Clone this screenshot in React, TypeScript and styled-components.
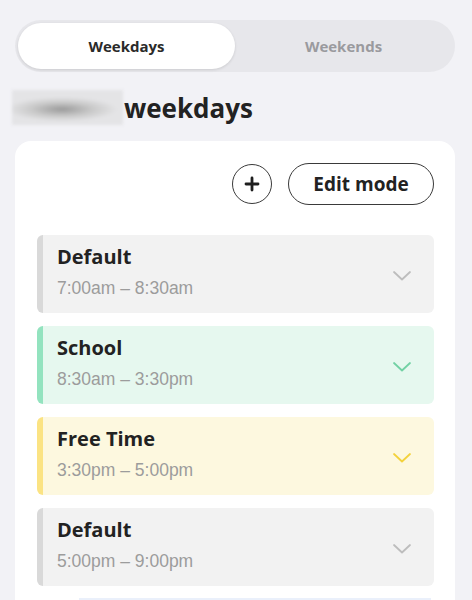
import * as React from 'react';
import styled, { createGlobalStyle } from 'styled-components';

const GlobalStyle = createGlobalStyle`
  html, body {
    margin: 0;
    padding: 0;
    background: #f2f2f6;
  }
  body {
    font-family: "Open Sans", "Noto Sans", sans-serif;
    color: #222;
  }
`;

const Page = styled.div`
  width: 472px;
  height: 600px;
  overflow: hidden;
  padding: 20px 17px 0 15px;
  box-sizing: border-box;
`;

const Segmented = styled.div`
  display: grid;
  grid-template-columns: 1fr 1fr;
  height: 52px;
  padding: 3px;
  box-sizing: border-box;
  border-radius: 26px;
  background: #e7e7eb;
`;

const Segment = styled.div<{ $active?: boolean }>`
  display: flex;
  align-items: center;
  justify-content: center;
  border-radius: 23px;
  font-size: 15px;
  font-weight: 700;
  color: ${(p) => (p.$active ? '#2a2a2a' : '#9a9a9e')};
  background: ${(p) => (p.$active ? '#fff' : 'transparent')};
  box-shadow: ${(p) => (p.$active ? '0 1px 3px rgba(0,0,0,0.12)' : 'none')};
`;

const Heading = styled.h1`
  display: flex;
  align-items: center;
  margin: 18px 0 16px -3px;
  height: 35px;
  font-size: 26px;
  font-weight: 700;
  color: #222;
`;

const Blurred = styled.span`
  display: inline-block;
  width: 111px;
  height: 35px;
  margin-right: 1px;
  background: radial-gradient(ellipse 50% 35% at 45% 55%, #9a9a9a 0%, #c9c9c9 55%, #e4e4e6 100%);
  filter: blur(1.5px);
`;

const Card = styled.div`
  background: #fff;
  border-radius: 16px;
  padding: 22px 21px 0 22px;
  height: 480px;
  box-sizing: border-box;
`;

const Toolbar = styled.div`
  display: flex;
  justify-content: flex-end;
  align-items: center;
  gap: 16px;
  margin-bottom: 30px;
`;

const RoundButton = styled.button`
  width: 40px;
  height: 40px;
  border-radius: 50%;
  border: 1.5px solid #3a3a3a;
  background: #fff;
  display: flex;
  align-items: center;
  justify-content: center;
  padding: 0;
`;

const PillButton = styled.button`
  height: 42px;
  width: 146px;
  padding: 0;
  border-radius: 21px;
  border: 1.5px solid #3a3a3a;
  background: #fff;
  font-family: "Open Sans", "Noto Sans", sans-serif;
  font-size: 19px;
  font-weight: 700;
  color: #222;
`;

const List = styled.div`
  display: flex;
  flex-direction: column;
  gap: 13px;
`;

const Item = styled.div<{ $bg: string; $bar: string }>`
  display: flex;
  align-items: center;
  height: 78px;
  border-radius: 6px;
  background: ${(p) => p.$bg};
  border-left: 6px solid ${(p) => p.$bar};
  padding: 0 22px 0 14px;
  box-sizing: border-box;
`;

const ItemText = styled.div`
  flex: 1;
  display: flex;
  flex-direction: column;
  align-self: flex-start;
  padding-top: 10px;
  gap: 9px;
`;

const ItemTitle = styled.div`
  font-size: 20px;
  font-weight: 700;
  color: #222;
  line-height: 24px;
`;

const ItemTime = styled.div`
  font-family: "Liberation Sans", Arial, sans-serif;
  font-size: 17.5px;
  color: #9c9c9c;
  line-height: 20px;
`;

const Chevron = ({ color }: { color: string }) => (
  <svg width="20" height="12" viewBox="0 0 20 12" style={{ marginTop: 4 }}>
    <path d="M2 2 L10 9.5 L18 2" fill="none" stroke={color} strokeWidth="1.8" strokeLinecap="round" strokeLinejoin="round" />
  </svg>
);

const Peek = styled.div`
  margin: 12px 3px 0 42px;
  height: 10px;
  border-top: 2px solid #eaf0fb;
`;

const blocks = [
  { title: 'Default', time: '7:00am – 8:30am', bg: '#f2f2f2', bar: '#d9d9d9', chev: '#bdbdbd' },
  { title: 'School', time: '8:30am – 3:30pm', bg: '#e6f8ef', bar: '#93e3bf', chev: '#72d1a4' },
  { title: 'Free Time', time: '3:30pm – 5:00pm', bg: '#fdf8df', bar: '#fbe383', chev: '#f3d23c' },
  { title: 'Default', time: '5:00pm – 9:00pm', bg: '#f2f2f2', bar: '#d9d9d9', chev: '#bdbdbd' },
];

export default function App() {
  return (
    <>
      <GlobalStyle />
      <Page>
        <Segmented>
          <Segment $active>Weekdays</Segment>
          <Segment>Weekends</Segment>
        </Segmented>
        <Heading>
          <Blurred />
          weekdays
        </Heading>
        <Card>
          <Toolbar>
            <RoundButton aria-label="Add">
              <svg width="16" height="16" viewBox="0 0 16 16">
                <path d="M8 2 V14 M2 8 H14" stroke="#1e1e1e" strokeWidth="2.8" strokeLinecap="round" />
              </svg>
            </RoundButton>
            <PillButton>Edit mode</PillButton>
          </Toolbar>
          <List>
            {blocks.map((b, i) => (
              <Item key={i} $bg={b.bg} $bar={b.bar}>
                <ItemText>
                  <ItemTitle>{b.title}</ItemTitle>
                  <ItemTime>{b.time}</ItemTime>
                </ItemText>
                <Chevron color={b.chev} />
              </Item>
            ))}
          </List>
          <Peek />
        </Card>
      </Page>
    </>
  );
}
